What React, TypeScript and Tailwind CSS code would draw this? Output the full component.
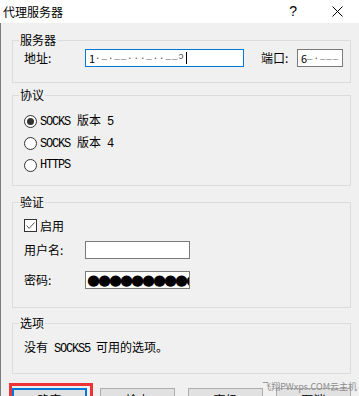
import type { ReactNode } from 'react';

const cjk = "font-['Noto_Sans_CJK_SC',sans-serif]";
const mono = "font-['Liberation_Mono',monospace] text-[12px] leading-[16px] tracking-[-1.2px]";

const Group = ({ title, className, children }: { title: string; className: string; children: ReactNode }) => (
  <fieldset className={`shrink-0 border border-[#dcdcdc] pl-[6px] ${className}`}>
    <legend className="px-px text-[12px] leading-[18px]">{title}</legend>
    <div className="pl-[5px]">{children}</div>
  </fieldset>
);

const Radio = ({ checked, children }: { checked?: boolean; children: ReactNode }) => (
  <div className="flex h-[22px] items-center">
    <span className="flex h-[13px] w-[13px] items-center justify-center rounded-full border border-[#333] bg-white">
      {checked && <span className="h-[7px] w-[7px] rounded-full bg-[#333]" />}
    </span>
    <span className="ml-[3px] flex items-baseline text-[12px] leading-[16px]">{children}</span>
  </div>
);

const Btn = ({ label, focused }: { label: string; focused?: boolean }) => (
  <div
    className={`h-[23px] w-[75px] bg-[#e1e1e1] text-center text-[12px] ${
      focused ? 'border-2 border-[#0078d7] leading-[19px]' : 'border border-[#adadad] leading-[21px]'
    }`}
  >
    {label}
  </div>
);

export default function App() {
  return (
    <div className={`relative h-[396px] w-[359px] overflow-hidden bg-[#f0f0f0] text-black ${cjk}`}>
      {/* Title bar */}
      <div className="flex h-[23px] items-center bg-white pl-[3px] text-[12px]">
        <span>代理服务器</span>
        <span className="ml-auto font-['Liberation_Sans',sans-serif] text-[14px]">?</span>
        <svg className="ml-[35px] mr-[16px]" width="11" height="11" viewBox="0 0 11 11">
          <path d="M0.5 0.5 L10.5 10.5 M10.5 0.5 L0.5 10.5" stroke="#000" strokeWidth="1" />
        </svg>
      </div>

      <div className="flex flex-col border-l border-[#7d7d7d] pb-[20px] pl-[11px] pr-[8px]">
        <Group title="服务器" className="mt-[8px] h-[52px]">
          <div className="flex h-[18px] items-center text-[12px]">
            <span className="w-[61px]">地址:</span>
            <div className="flex h-[18px] w-[159px] items-center border border-[#0078d7] bg-white pl-[3px]">
              <span className="text-[11px]">1</span>
              <span className="font-['Liberation_Mono',monospace] text-[9px] tracking-[1px] text-[#444]">._.__..._..__ɔ</span>
              <span className="ml-px h-[12px] w-px bg-black" />
            </div>
            <span className="ml-[17px] w-[36px]">端口:</span>
            <div className="flex h-[18px] w-[46px] items-center border border-[#7a7a7a] bg-white pl-[3px]">
              <span className="text-[11px]">6</span>
              <span className="font-['Liberation_Mono',monospace] text-[9px] tracking-[1px] text-[#444]">_.___</span>
            </div>
          </div>
        </Group>

        <Group title="协议" className="mt-[3px] h-[100px]">
          <div className="pt-[6px]">
            <Radio checked>
              <span className={mono}>SOCKS</span>
              <span className="ml-[7px]">版本</span>
              <span className={`${mono} ml-[6px]`}>5</span>
            </Radio>
            <Radio>
              <span className={mono}>SOCKS</span>
              <span className="ml-[7px]">版本</span>
              <span className={`${mono} ml-[6px]`}>4</span>
            </Radio>
            <Radio>
              <span className={mono}>HTTPS</span>
            </Radio>
          </div>
        </Group>

        <Group title="验证" className="mt-[7px] h-[115px]">
          <div className="pt-[8px] text-[12px]">
            <div className="flex h-[13px] items-center">
              <span className="flex h-[13px] w-[13px] items-center justify-center border border-[#333] bg-white">
                <svg width="11" height="11" viewBox="0 0 11 11">
                  <path d="M1.5 5.5 L4.2 8.3 L9.5 2.5" fill="none" stroke="#555" strokeWidth="1" />
                </svg>
              </span>
              <span className="ml-[3px]">启用</span>
            </div>
            <div className="mt-[9px] flex h-[18px] items-center">
              <span className="w-[61px]">用户名:</span>
              <div className="h-[18px] w-[105px] border border-[#7a7a7a] bg-white" />
            </div>
            <div className="mt-[12px] flex h-[18px] items-center">
              <span className="w-[61px]">密码:</span>
              <div className="flex h-[18px] w-[105px] items-center overflow-hidden border border-[#7a7a7a] bg-white pl-px">
                {Array.from({ length: 9 }).map((_, i) => (
                  <span key={i} className="inline-block w-[11px] shrink-0 text-center font-['DejaVu_Sans',sans-serif] text-[15px] leading-[16px]">
                    ●
                  </span>
                ))}
                <span className="inline-block w-[4px] shrink-0 overflow-hidden font-['DejaVu_Sans',sans-serif] text-[15px] leading-[16px]">●</span>
              </div>
            </div>
          </div>
        </Group>

        <Group title="选项" className="mt-[6px] h-[60px]">
          <div className="mt-[7px] flex h-[18px] items-baseline text-[12px] leading-[16px]">
            <span>没有</span>
            <span className={`${mono} ml-[6px]`}>SOCKS5</span>
            <span className="ml-[6px]">可用的选项。</span>
          </div>
        </Group>

        <div className="mt-[14px] flex shrink-0 justify-between">
          <div className="relative">
            <Btn label="确定" focused />
            <div className="absolute left-[-3px] top-[-5px] h-[30px] w-[84px] border-[3px] border-[#ec3337]" />
          </div>
          <Btn label="检查" />
          <Btn label="高级" />
          <Btn label="取消" />
        </div>
      </div>

      {/* watermark */}
      <span className="absolute right-[2px] top-[382px] text-[9px] leading-[10px] text-[#8c8c8c]">飞翔PWxps.COM云主机</span>
    </div>
  );
}
